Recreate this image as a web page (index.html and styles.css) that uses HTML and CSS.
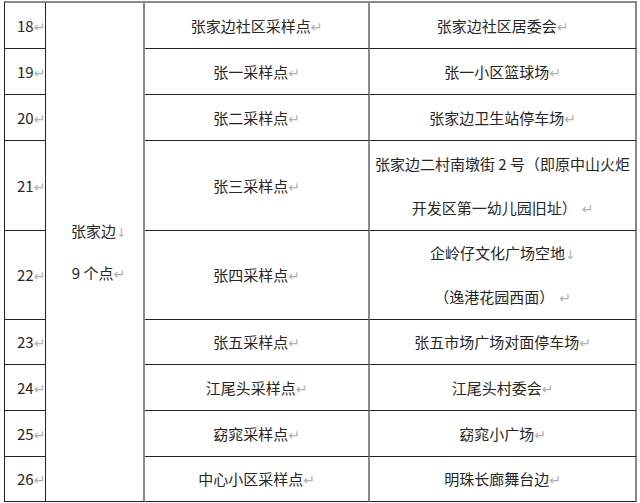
FILE: index.html
```html
<!DOCTYPE html>
<html lang="zh-CN">
<head>
<meta charset="utf-8">
<title>张家边采样点</title>
<link rel="stylesheet" href="styles.css">
</head>
<body>
<table class="sites">
  <colgroup>
    <col class="c-num">
    <col class="c-area">
    <col class="c-name">
    <col class="c-addr">
  </colgroup>
  <tbody>
    <tr class="h46">
      <td class="num">18<span class="pm">↵</span></td>
      <td class="area" rowspan="9"><div class="area-line">张家边<span class="lb">↓</span></div><div class="area-line">9 个点<span class="pm">↵</span></div></td>
      <td class="name">张家边社区采样点<span class="pm">↵</span></td>
      <td class="addr">张家边社区居委会<span class="pm">↵</span></td>
    </tr>
    <tr class="h46">
      <td class="num">19<span class="pm">↵</span></td>
      <td class="name">张一采样点<span class="pm">↵</span></td>
      <td class="addr">张一小区篮球场<span class="pm">↵</span></td>
    </tr>
    <tr class="h46">
      <td class="num">20<span class="pm">↵</span></td>
      <td class="name">张二采样点<span class="pm">↵</span></td>
      <td class="addr">张家边卫生站停车场<span class="pm">↵</span></td>
    </tr>
    <tr class="h90">
      <td class="num">21<span class="pm">↵</span></td>
      <td class="name">张三采样点<span class="pm">↵</span></td>
      <td class="addr two"><div class="ln">张家边二村南墩街 2 号（即原中山火炬</div><div class="ln">开发区第一幼儿园旧址）<span class="pm sp">↵</span></div></td>
    </tr>
    <tr class="h89">
      <td class="num">22<span class="pm">↵</span></td>
      <td class="name">张四采样点<span class="pm">↵</span></td>
      <td class="addr two"><div class="ln">企岭仔文化广场空地<span class="lb">↓</span></div><div class="ln">（逸港花园西面）<span class="pm sp">↵</span></div></td>
    </tr>
    <tr class="h45">
      <td class="num">23<span class="pm">↵</span></td>
      <td class="name">张五采样点<span class="pm">↵</span></td>
      <td class="addr">张五市场广场对面停车场<span class="pm">↵</span></td>
    </tr>
    <tr class="h46">
      <td class="num">24<span class="pm">↵</span></td>
      <td class="name">江尾头采样点<span class="pm">↵</span></td>
      <td class="addr">江尾头村委会<span class="pm">↵</span></td>
    </tr>
    <tr class="h46">
      <td class="num">25<span class="pm">↵</span></td>
      <td class="name">窈窕采样点<span class="pm">↵</span></td>
      <td class="addr">窈窕小广场<span class="pm">↵</span></td>
    </tr>
    <tr class="h45">
      <td class="num">26<span class="pm">↵</span></td>
      <td class="name">中心小区采样点<span class="pm">↵</span></td>
      <td class="addr">明珠长廊舞台边<span class="pm">↵</span></td>
    </tr>
  </tbody>
</table>
</body>
</html>
```
FILE: styles.css
```css
html, body {
  margin: 0;
  padding: 0;
  background: #ffffff;
}

body {
  font-family: "Noto Sans CJK SC", "Noto Sans", sans-serif;
  font-size: 15px;
  color: #262626;
}

.sites {
  margin: 1px 0 0 4px;
  border-collapse: separate;
  border-spacing: 0;
  table-layout: fixed;
  width: 633px;
  border-top: 2px solid #8a8a8a;
  border-left: 1px solid #222222;
}

.c-num { width: 41px; }
.c-area { width: 99px; }
.c-name { width: 225px; }
.c-addr { width: 267px; }

.sites td {
  box-sizing: border-box;
  padding: 0;
  vertical-align: middle;
  text-align: center;
  white-space: nowrap;
  border-bottom: 1px solid #222222;
  line-height: 20px;
}

.h46 { height: 46px; }
.h45 { height: 45px; }
.h90 { height: 90px; }
.h89 { height: 89px; }

.sites td.num {
  text-align: left;
  padding-left: 12px;
  border-right: 1px solid #222222;
}

.sites td.area {
  border-right: 2px solid #8a8a8a;
  padding-left: 8px;
}

.area-line {
  height: 42px;
  line-height: 42px;
}

.name {
  border-right: 2px solid #8a8a8a;
}

.addr {
  border-right: 2px solid #8a8a8a;
}

.ln {
  height: 44px;
  line-height: 44px;
}

.pm,
.lb {
  font-family: "DejaVu Sans", sans-serif;
  font-size: 14px;
  line-height: 1;
  color: #b0b0b0;
  margin-left: 0;
}

.lb {
  font-size: 12px;
}

.pm.sp {
  margin-left: 5px;
}
```
